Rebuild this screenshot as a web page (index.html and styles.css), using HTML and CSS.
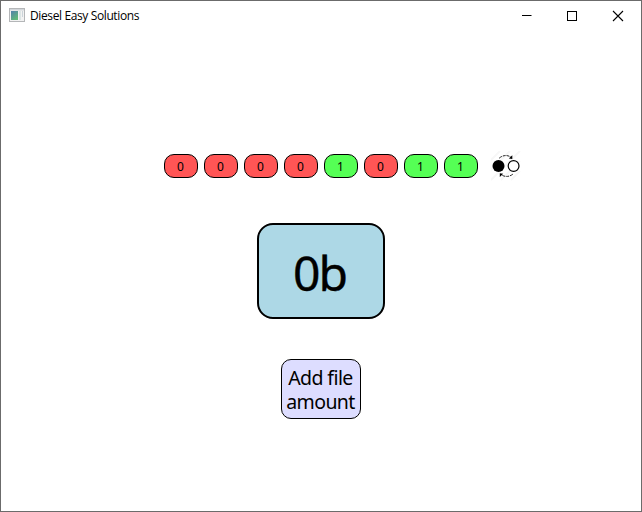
FILE: index.html
```html
<!DOCTYPE html>
<html lang="en">
<head>
<meta charset="utf-8">
<title>Diesel Easy Solutions</title>
<link rel="stylesheet" href="styles.css">
</head>
<body>
<div class="window">
  <header class="titlebar">
    <svg class="app-icon" width="16" height="14" viewBox="0 0 16 14">
      <defs><linearGradient id="pane" x2="0.6" y2="1"><stop offset="0" stop-color="#527fac"/><stop offset="1" stop-color="#61b978"/></linearGradient></defs>
      <rect x=".5" y=".5" width="15" height="13" fill="#f2f2f2" stroke="#b4b6b8"/>
      <rect x="1" y="1" width="14" height="1.5" fill="#d2d6da"/>
      <rect x="2" y="3" width="7" height="9" fill="url(#pane)"/>
      <rect x="10" y="3" width="2" height="9" fill="#dce5e5"/>
      <rect x="13" y="3" width="1" height="6" fill="#cbd4d9"/>
    </svg>
    <span class="title">Diesel Easy Solutions</span>
    <div class="controls">
      <svg width="10" height="10" viewBox="0 0 10 10"><path d="M1 4.5H10.5" stroke="#000"/></svg>
      <svg width="10" height="10" viewBox="0 0 10 10"><rect x=".5" y=".5" width="9" height="9" fill="none" stroke="#000"/></svg>
      <svg width="10" height="10" viewBox="0 0 10 10"><path d="M0 0L10 10M10 0L0 10" stroke="#000" stroke-width="1.1"/></svg>
    </div>
  </header>
  <main class="content">
    <div class="bits">
      <button class="bit">0</button>
      <button class="bit">0</button>
      <button class="bit">0</button>
      <button class="bit">0</button>
      <button class="bit on">1</button>
      <button class="bit">0</button>
      <button class="bit on">1</button>
      <button class="bit on">1</button>
      <svg class="swap" width="30" height="30" viewBox="0 0 30 30">
        <path d="M0 9L9 0M0 19L19 0M0 29L29 0M10 29L29 10M20 29L29 20" stroke="#f7f7f7" stroke-width="2"/>
        <circle cx="7.5" cy="15" r="6" fill="#000"/>
        <circle cx="22.6" cy="15" r="5.4" fill="#fff" stroke="#000" stroke-width="1.2"/>
        <path d="M8.2 7.2Q13.5 2.6 20 6" fill="none" stroke="#222" stroke-dasharray="3 1"/>
        <path d="M21.3 4.3V8L17.8 7.5Z" fill="#000"/>
        <path d="M21.8 23.2Q16.5 27.2 10.5 24" fill="none" stroke="#222" stroke-dasharray="3 1"/>
        <path d="M8.8 26V22.3L12.2 22.8Z" fill="#000"/>
      </svg>
    </div>
    <div class="amount"><span>0b</span></div>
    <button class="add">Add file<br>amount</button>
  </main>
</div>
</body>
</html>
```
FILE: styles.css
```css
* { box-sizing: border-box; }

body {
  margin: 0;
  color: #000;
  font-family: "Noto Sans", "Open Sans", sans-serif;
}

button {
  margin: 0;
  padding: 0;
  color: inherit;
  font-family: inherit;
}

.window {
  width: 642px;
  height: 512px;
  border: 1px solid #6b6b6b;
  background: #fff;
}

.titlebar {
  display: flex;
  align-items: center;
  height: 30px;
  padding: 0 18px 0 8px;
}

.app-icon { margin: 0 5px 2px 0; }

.title {
  font: 12px/16px "Open Sans", "Noto Sans", sans-serif;
  letter-spacing: -0.38px;
  white-space: nowrap;
}

.controls {
  display: flex;
  gap: 36px;
  margin: 0 0 1px auto;
}

.controls svg {
  display: block;
  overflow: visible;
}

.content {
  display: flex;
  flex-direction: column;
  align-items: center;
  padding-top: 120px;
}

.bits {
  display: flex;
  align-items: center;
  gap: 6px;
  height: 30px;
  margin-left: 43px;
}

.bit {
  width: 34px;
  height: 24px;
  padding: 2px 1px 0 0;
  border: 1px solid #000;
  border-radius: 10px;
  background: #f55;
  font-size: 12px;
  line-height: 20px;
}

.bit.on { background: #5f5; }

.swap { margin-left: 7px; }

.amount {
  display: flex;
  align-items: center;
  justify-content: center;
  width: 128px;
  height: 96px;
  margin-top: 42px;
  padding: 3px 3px 0 0;
  border: 2px solid #000;
  border-radius: 16px;
  background: #add8e6;
  font-size: 48px;
  line-height: 60px;
  letter-spacing: -2px;
  -webkit-text-stroke: 0.4px #000;
}

.add {
  width: 80px;
  height: 60px;
  margin-top: 40px;
  padding: 2px 1px 0 0;
  border: 1px solid #000;
  border-radius: 10px;
  background: #ddf;
  font-size: 19.5px;
  line-height: 24px;
  letter-spacing: -0.6px;
}
```
